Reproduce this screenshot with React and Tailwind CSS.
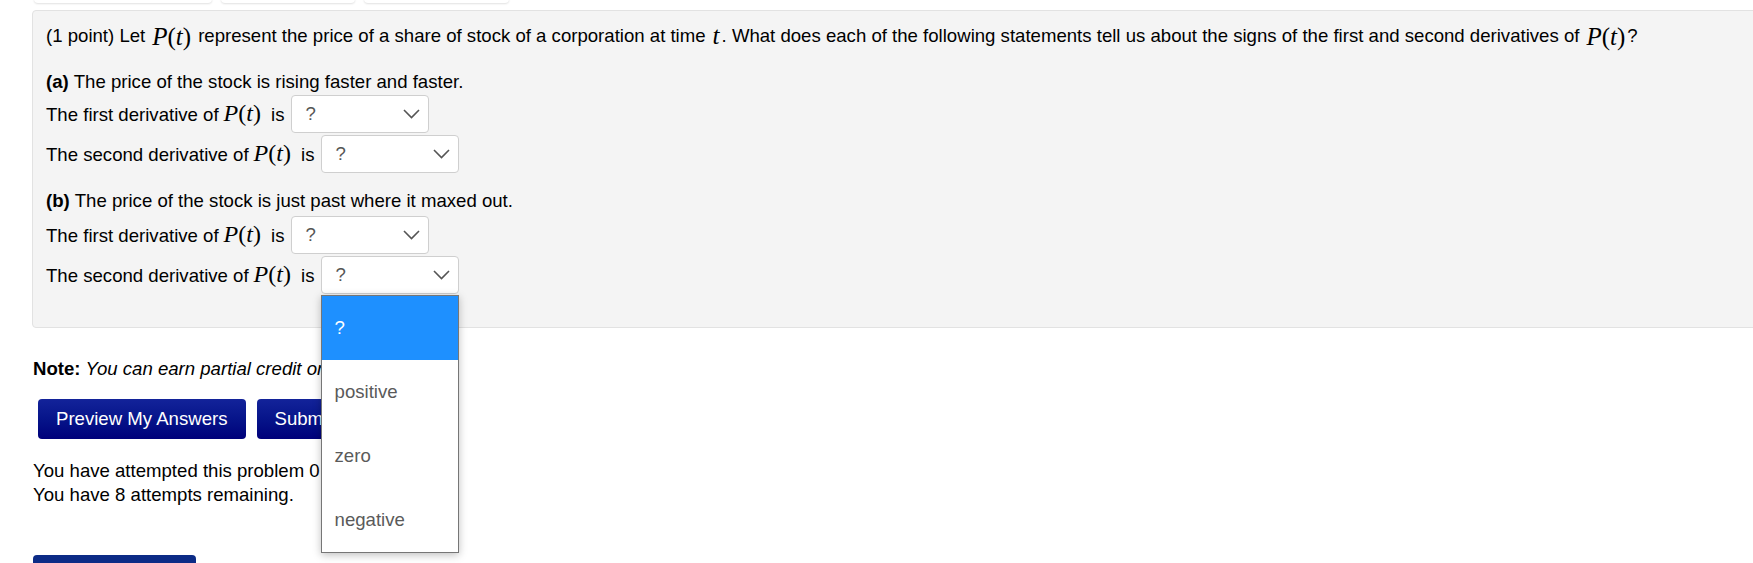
import React from 'react';

// MathJax-like P(t)
const Pt = ({ v = 'P', arg = 't', end = false, wide = false }) => (
  <span
    className={`font-['Liberation_Serif',serif] leading-none ${wide ? 'text-[25px] ml-[7px]' : 'text-[24px] ml-[5px]'} ${end ? 'mr-[2px]' : wide ? 'mr-[7px]' : 'mr-[5px]'}`}
  >
    <i>{v}</i>(<i>{arg}</i>)
  </span>
);

const Chevron = () => (
  <svg width="17" height="10" viewBox="0 0 17 10" className="shrink-0">
    <polyline points="1,1 8.5,8.5 16,1" fill="none" stroke="#555" strokeWidth="1.6" />
  </svg>
);

const options = ['?', 'positive', 'zero', 'negative'];

const Select = ({ open = false }) => (
  <div className="relative ml-[6px]">
    <div className="w-[138px] h-[38px] bg-white border border-[#cfcfcf] rounded-[4px] flex items-center justify-between pl-[14px] pr-[8px] text-[#555]">
      <span>?</span>
      <Chevron />
    </div>
    {open && (
      <div className="absolute left-0 top-full mt-[1px] w-[138px] bg-white border border-[#767676] shadow-[0_2px_8px_rgba(0,0,0,0.25)] z-10">
        {options.map((o, i) => (
          <div
            key={o}
            className={`h-[64px] flex items-center pl-[13px] ${i === 0 ? 'bg-[#1e90ff] text-white' : 'text-[#5a5a5a]'}`}
          >
            {o}
          </div>
        ))}
      </div>
    )}
  </div>
);

const Row = ({ label, open }) => (
  <div className="flex items-center h-[38px]">
    <span>
      The {label} derivative of<Pt /> is
    </span>
    <Select open={open} />
  </div>
);

export default function App() {
  return (
    <div className="w-full h-[563px] overflow-hidden bg-white text-black font-['Liberation_Sans',Arial,sans-serif] text-[18.6px] leading-[24px]">
      {/* tab strip, only bottoms visible */}
      <div className="flex h-[3px] pl-[34px] gap-[9px]">
        <div className="w-[178px] h-[40px] -mt-[37px] bg-white rounded-[4px] shadow-[0_1px_2px_rgba(0,0,0,0.12)]" />
        <div className="w-[134px] h-[40px] -mt-[37px] bg-white rounded-[4px] shadow-[0_1px_2px_rgba(0,0,0,0.12)]" />
        <div className="w-[145px] h-[40px] -mt-[37px] bg-white rounded-[4px] shadow-[0_1px_2px_rgba(0,0,0,0.12)]" />
      </div>

      {/* problem panel */}
      <div className="ml-[32px] mt-[7px] w-[1760px] h-[318px] bg-[#f4f4f4] border border-[#e2e2e2] rounded-[4px] pl-[13px] pt-[12px]">
        <p className="h-[26px] flex items-center whitespace-pre">
          (1 point) Let<Pt wide />represent the price of a share of stock of a corporation at time
          <span className="font-['Liberation_Serif',serif] text-[25px] italic ml-[7px] mr-[2px]">t</span>. What does each of the following statements tell us about the signs of the first and second derivatives of<Pt wide end />?
        </p>

        <p className="mt-[20px] h-[26px] flex items-center">
          <b className="mr-[5px]">(a)</b> The price of the stock is rising faster and faster.
        </p>
        <div className="mt-[0px] flex flex-col gap-[2px]">
          <Row label="first" />
          <Row label="second" />
        </div>

        <p className="mt-[15px] h-[26px] flex items-center">
          <b className="mr-[5px]">(b)</b> The price of the stock is just past where it maxed out.
        </p>
        <div className="mt-[2px] flex flex-col gap-[2px]">
          <Row label="first" />
          <Row label="second" open />
        </div>
      </div>

      <div className="pl-[33px]">
        <p className="mt-[28px] h-[26px] flex items-center">
          <b className="mr-[5px]">Note:</b>
          <i>You can earn partial credit on this problem.</i>
        </p>

        <div className="mt-[17px] flex gap-[11px] pl-[5px]">
          <button className="h-[40px] px-[18px] rounded-[4px] text-white bg-gradient-to-b from-[#13239a] to-[#00007a]">
            Preview My Answers
          </button>
          <button className="h-[40px] px-[18px] rounded-[4px] text-white bg-gradient-to-b from-[#13239a] to-[#00007a]">
            Submit Answers
          </button>
        </div>

        <div className="mt-[20px]">
          <p>You have attempted this problem 0 times.</p>
          <p>You have 8 attempts remaining.</p>
        </div>

        <div className="mt-[48px] w-[163px] h-[40px] rounded-[4px] bg-[#0c2b86]" />
      </div>
    </div>
  );
}
